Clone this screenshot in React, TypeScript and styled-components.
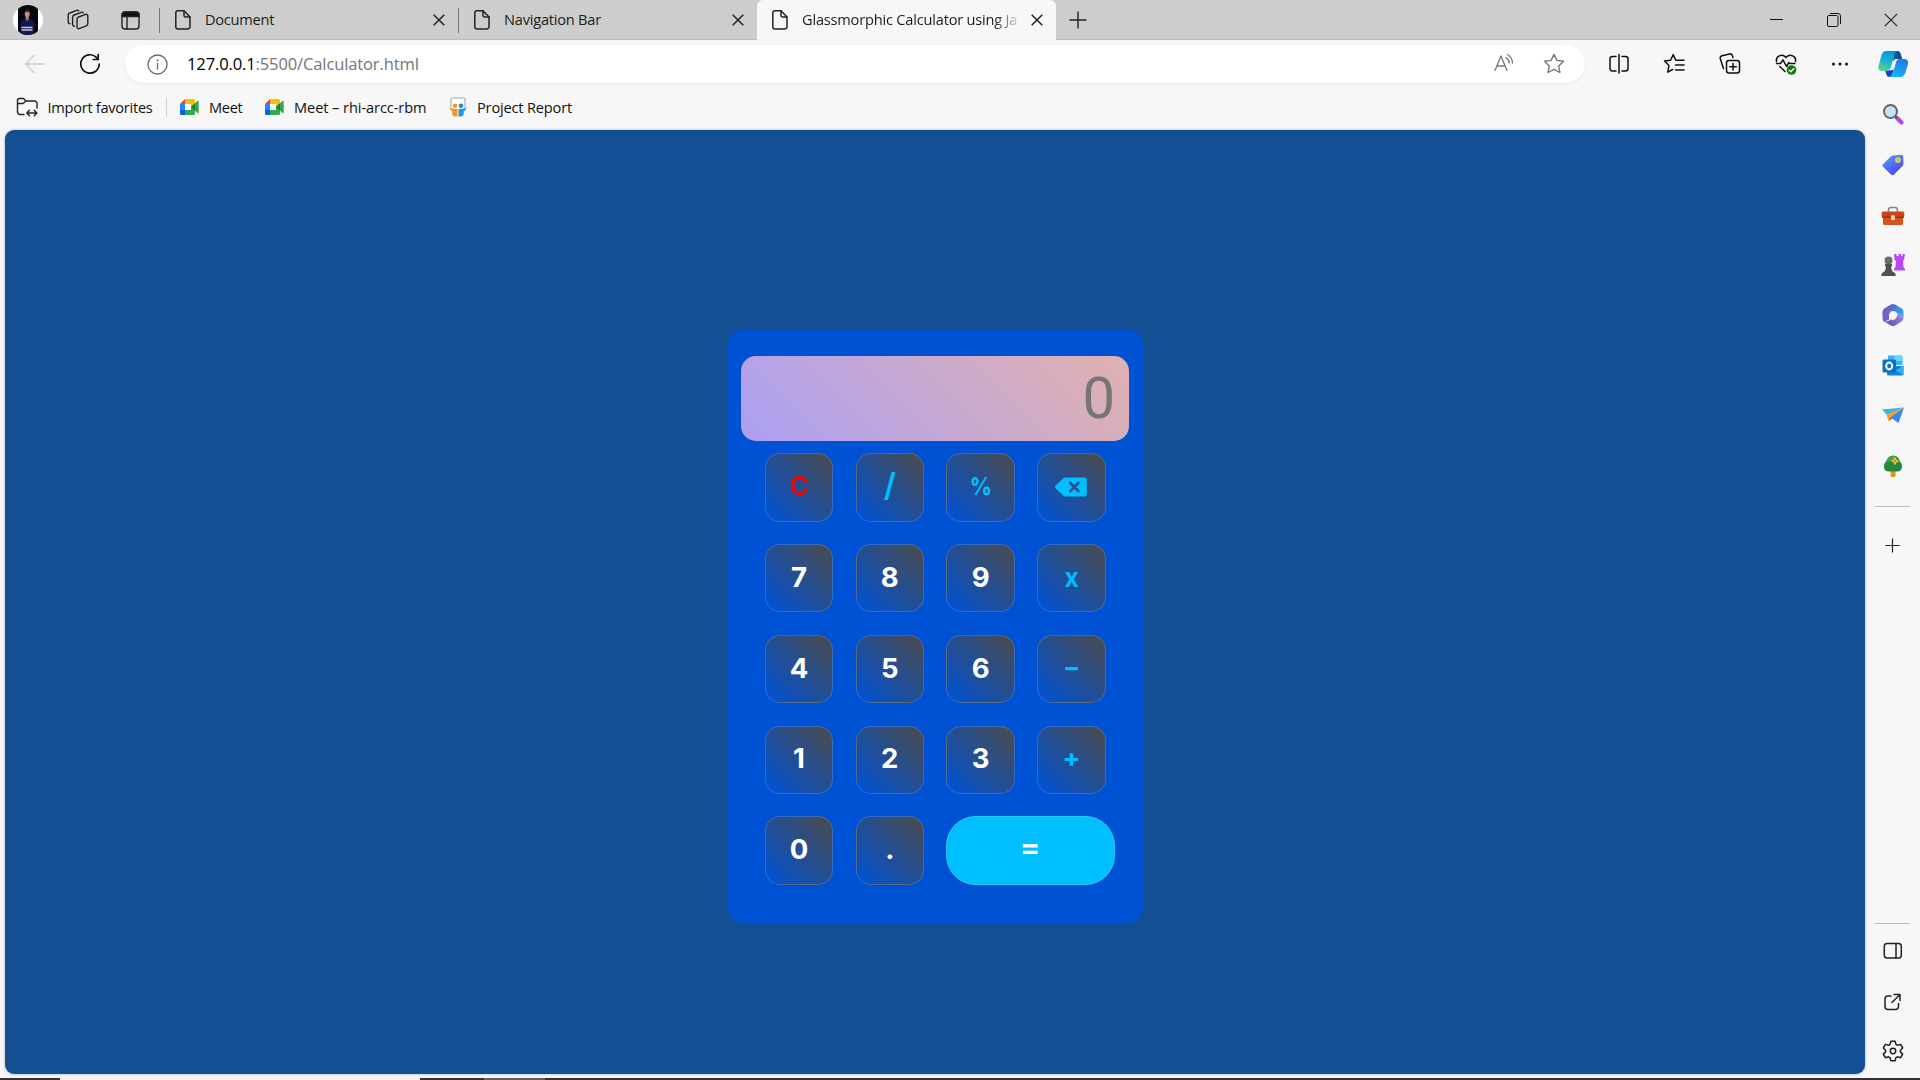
import React from "react";
import styled, { createGlobalStyle, css } from "styled-components";

const uiFont = `"Open Sans", "Noto Sans", sans-serif`;
const keyFont = `"Inter", "Open Sans", sans-serif`;

const GlobalStyle = createGlobalStyle`
  * { box-sizing: border-box; }
  html, body { margin: 0; padding: 0; overflow: hidden; }
  body { font-family: ${uiFont}; color: #1b1b1b; }
  svg { display: block; flex: none; }
`;

/* ---------- window ---------- */

const Window = styled.div`
  display: flex;
  flex-direction: column;
  width: 1920px;
  height: 1080px;
  background: #f7f7f7;
`;

const TabStrip = styled.header`
  display: flex;
  align-items: center;
  height: 40px;
  background: #cdcdcd;
  box-shadow: inset 0 -1px 0 #bcbcbc;
`;

const StripTools = styled.div`
  display: flex;
  align-items: center;
  gap: 24px;
  width: 159px;
  padding-left: 13px;
  svg:last-child { margin-left: 8px; }
`;

const Divider = styled.span<{ $h?: number; $color?: string }>`
  flex: none;
  width: 1px;
  height: ${(p) => p.$h ?? 25}px;
  background: ${(p) => p.$color ?? "#808080"};
`;

const Tab = styled.div<{ $active?: boolean; $width: number }>`
  display: flex;
  align-items: center;
  flex: none;
  width: ${(p) => p.$width}px;
  height: 40px;
  padding: 0 13px 0 15px;
  ${(p) =>
    p.$active &&
    css`
      background: #f7f7f7;
      border-radius: 6px 6px 0 0;
    `}
`;

const TabTitle = styled.span<{ $fade?: boolean; $spacing: number }>`
  flex: 1;
  min-width: 0;
  margin-left: 14px;
  margin-right: 7px;
  overflow: hidden;
  white-space: nowrap;
  font-size: 14.6px;
  line-height: 22px;
  padding-bottom: 2px;
  letter-spacing: ${(p) => p.$spacing}px;
  ${(p) =>
    p.$fade &&
    css`
      mask-image: linear-gradient(90deg, #000 calc(100% - 30px), transparent calc(100% - 2px));
    `}
`;

const NewTab = styled.div`
  margin-left: 13px;
`;

const WindowControls = styled.div`
  display: flex;
  align-items: center;
  gap: 43.5px;
  margin-left: auto;
  padding-right: 22px;
`;

const Body = styled.div`
  display: flex;
  flex: 1;
  min-height: 0;
`;

const Main = styled.div`
  display: flex;
  flex-direction: column;
  width: 1865px;
`;

const Toolbar = styled.div`
  display: flex;
  align-items: center;
  height: 48px;
  padding-left: 24px;
`;

const NavButtons = styled.div`
  display: flex;
  align-items: center;
  gap: 33px;
  width: 101px;
`;

const AddressBar = styled.div`
  display: flex;
  align-items: center;
  width: 1460px;
  height: 38px;
  padding: 0 20px 0 22px;
  border-radius: 19px;
  background: #fff;
  box-shadow: 0 1px 3px rgba(0, 0, 0, 0.07);
`;

const Url = styled.span`
  margin-left: 19px;
  font-size: 16.6px;
  line-height: 26px;
  letter-spacing: -0.16px;
  color: #767676;
  white-space: nowrap;
  b {
    font-weight: 400;
    color: #000;
  }
`;

const AddressActions = styled.div`
  display: flex;
  gap: 29px;
  margin-left: auto;
`;

const ToolbarActions = styled.div`
  display: flex;
  align-items: center;
  gap: 34px;
  margin-left: 24px;
`;

const Favorites = styled.div`
  display: flex;
  align-items: center;
  height: 42px;
  padding-left: 16px;
  padding-bottom: 4px;
`;

const Favorite = styled.div<{ $left?: number; $gap: number; $width: number; $spacing: number }>`
  display: flex;
  align-items: center;
  flex: none;
  gap: ${(p) => p.$gap}px;
  width: ${(p) => p.$width}px;
  margin-left: ${(p) => p.$left ?? 0}px;
  font-size: 14.6px;
  line-height: 20px;
  letter-spacing: ${(p) => p.$spacing}px;
  white-space: nowrap;
  color: #111;
`;

const Page = styled.main`
  display: flex;
  align-items: center;
  justify-content: center;
  width: 1860px;
  height: 944px;
  margin-left: 5px;
  border-radius: 9px;
  background: #144f94;
  box-shadow: 0 0 3px rgba(0, 0, 0, 0.3);
`;

/* ---------- sidebar ---------- */

const Sidebar = styled.aside`
  display: flex;
  flex-direction: column;
  align-items: center;
  width: 55px;
`;

const SideCell = styled.div<{ $h?: number }>`
  display: flex;
  align-items: center;
  justify-content: center;
  flex: none;
  height: ${(p) => p.$h ?? 50.2}px;
`;

const SideRule = styled.div`
  flex: none;
  width: 35px;
  height: 1px;
  background: #bdbdbd;
`;

const SideBottom = styled.div`
  display: flex;
  flex-direction: column;
  align-items: center;
  margin-top: auto;
  padding-bottom: 1px;
`;

const Taskbar = styled.div`
  display: flex;
  flex: none;
  height: 2px;
  background: #333133;
`;

const TaskbarPart = styled.span<{ $left: number; $width: number; $color: string }>`
  width: ${(p) => p.$width}px;
  margin-left: ${(p) => p.$left}px;
  background: ${(p) => p.$color};
`;

/* ---------- calculator ---------- */

const Calculator = styled.section`
  width: 415px;
  height: 593px;
  margin-top: 49px;
  margin-left: 1px;
  padding: 26px 13px 0 13px;
  border-radius: 15px;
  background: #0052d4;
`;

const Display = styled.input`
  display: block;
  width: 388px;
  height: 85px;
  padding: 0 14px 2px 14px;
  border: 0;
  border-radius: 15px;
  outline: 0;
  background: linear-gradient(45deg, #aca0f4, #e1b1ae);
  text-align: right;
  font-family: "Roboto", sans-serif;
  font-size: 58px;
  color: #333;
  &::placeholder {
    color: #757575;
    opacity: 1;
  }
`;

const Keys = styled.div`
  display: flex;
  flex-direction: column;
  gap: 22.4px;
  padding: 12.2px 0 0 23.8px;
`;

const KeyRow = styled.div`
  display: flex;
  gap: 22.4px;
`;

const keyColors = { digit: "#ffffff", clear: "#ff0000", operator: "#00bfff", equals: "#ffffff" };
type KeyKind = keyof typeof keyColors;

const Key = styled.button<{ $kind: KeyKind; $size: number; $weight: number; $shift: number }>`
  display: flex;
  align-items: center;
  justify-content: center;
  flex: none;
  width: ${(p) => (p.$kind === "equals" ? 168.8 : 68.4)}px;
  height: 68.4px;
  padding: 0 0 ${(p) => p.$shift}px;
  border: 1px solid rgba(255, 255, 255, 0.16);
  border-radius: ${(p) => (p.$kind === "equals" ? 30 : 15)}px;
  background: ${(p) =>
    p.$kind === "equals" ? "#00bfff" : "linear-gradient(45deg, #0052d4 3%, #4b4b4b)"};
  color: ${(p) => keyColors[p.$kind]};
  font-family: ${keyFont};
  font-size: ${(p) => p.$size}px;
  font-weight: ${(p) => p.$weight};
  line-height: 1;
`;

const Glyph = styled.span<{ $stretch: number }>`
  transform: scaleX(${(p) => p.$stretch});
`;

/* ---------- icons ---------- */

const line = {
  fill: "none",
  stroke: "#222",
  strokeWidth: 1.4,
  strokeLinecap: "round" as const,
  strokeLinejoin: "round" as const,
};

const FileIcon = () => (
  <svg width="16" height="20" viewBox="0 0 16 20" {...line} strokeWidth={1.5}>
    <path d="M3 .8h6L15 7v9.700a2.300 2.300 0 0 1-2.300 2.300H3.100A2.300 2.300 0 0 1 .8 16.700V3A2.200 2.200 0 0 1 3 .8Z" />
    <path d="M9 1v4.500A1.500 1.500 0 0 0 10.500 7H15" />
  </svg>
);

const CrossIcon = ({ size = 12, width = 1.5, color = "#222" }) => (
  <svg width={size} height={size} viewBox="0 0 12 12" stroke={color} strokeWidth={width}>
    <path d="M.7.7l10.600 10.600M11.300.7.7 11.300" />
  </svg>
);

const PlusIcon = ({ size = 18 }) => (
  <svg width={size} height={size} viewBox="0 0 18 18" stroke="#222" strokeWidth="1.4">
    <path d="M9 .5v17M.5 9h17" />
  </svg>
);

const AvatarIcon = () => (
  <svg width="30" height="30" viewBox="0 0 30 30">
    <circle cx="15" cy="15" r="15" fill="#fff" />
    <path d="M5 4Q9 0 15 0t10 4v22q-4 4-10 4T5 26Z" fill="#05050f" />
    <path d="M7.500 28V18q.5-3 4.500-4l2-1 2 1q4 .5 5 4v10q-3 2-7 2t-6.500-2Z" fill="#14194f" />
    <path d="M12.500 12h3.500v2.500l-1.700 1.500-1.800-1.500Z" fill="#9c6a5c" />
    <path d="M11.800 8Q11.800 5 14.200 5t2.500 3v2q-.8 3-2.500 3t-2.400-3Z" fill="#c08e7e" />
    <path d="M11.500 8V6q.2-2 2.700-2T17 6v2q-.7-1.600-2.800-1.600T11.500 8Z" fill="#241a1c" />
    <path d="M8.500 22.500h11M8.500 25h11" stroke="#c4c8e8" strokeWidth="1.300" />
  </svg>
);

const WorkspacesIcon = () => (
  <svg width="22" height="22" viewBox="0 0 22 22" {...line}>
    <path d="m11.600 8 7-2.600a1.700 1.700 0 0 1 2.200 1.600v7.700a2.500 2.500 0 0 1-1.600 2.200l-7 2.700a1.700 1.700 0 0 1-2.200-1.700v-7.700a2.500 2.500 0 0 1 1.600-2.200Z" />
    <path d="M7.400 17.300a2 2 0 0 1-1.800-2V8.200a2.500 2.500 0 0 1 1.600-2.200l7-2.700a1.800 1.800 0 0 1 2 .5" />
    <path d="M3 14.800a2 2 0 0 1-1.800-2V6.200a2.500 2.500 0 0 1 1.600-2.200l6.900-2.700a1.800 1.800 0 0 1 2 .5" />
  </svg>
);

const VerticalTabsIcon = () => (
  <svg width="19" height="19" viewBox="0 0 19 19" {...line}>
    <rect x="1" y="1" width="17" height="17" rx="3" />
    <path d="M1 4a3 3 0 0 1 3-3h11a3 3 0 0 1 3 3v1.500H1Z" fill="#111" />
    <path d="M6 6v12" />
  </svg>
);

const MinimizeIcon = () => (
  <svg width="13" height="14" viewBox="0 0 13 14" stroke="#111" strokeWidth="1">
    <path d="M0 6.500h13" />
  </svg>
);

const RestoreIcon = () => (
  <svg width="14" height="14" viewBox="0 0 14 14" fill="none" stroke="#111" strokeWidth="1">
    <rect x=".5" y="2.500" width="10.500" height="11" rx="1.500" />
    <path d="M3 .5h8a2.500 2.500 0 0 1 2.500 2.500v8" />
  </svg>
);

const BackIcon = () => (
  <svg width="22" height="20" viewBox="0 0 22 20" {...line} stroke="#cfcfcf" strokeWidth={1.500}>
    <path d="M20.500 10H1.500M10 1.500 1.500 10l8.500 8.500" />
  </svg>
);

const ReloadIcon = () => (
  <svg width="22" height="22" viewBox="0 0 22 22" {...line} stroke="#111" strokeWidth={1.700}>
    <path d="M20.200 11a9.200 9.200 0 1 1-3.100-6.900l2 2" />
    <path d="M19.200 1.500v5h-5" />
  </svg>
);

const InfoIcon = () => (
  <svg width="21" height="21" viewBox="0 0 21 21" {...line} stroke="#707070">
    <circle cx="10.500" cy="10.500" r="9.500" />
    <path d="M10.500 9.500v5.500" />
    <circle cx="10.500" cy="6.300" r=".4" fill="#707070" />
  </svg>
);

const ReadAloudIcon = () => (
  <svg width="20" height="20" viewBox="0 0 20 20" {...line} stroke="#777" strokeWidth={1.300}>
    <path d="M1 17.500 7 3l6 14.500M3 13h8" />
    <path d="M12 4.500q3 2 3.200 5.500M13.500 1.500q4.800 2.800 5 8.500" />
  </svg>
);

const StarIcon = () => (
  <svg width="22" height="22" viewBox="0 0 22 22" {...line} stroke="#777">
    <path d="m11 1.400 2.900 6 6.600.9-4.800 4.600 1.200 6.600-5.900-3.200-5.900 3.200 1.200-6.600L1.500 8.300l6.600-.9Z" />
  </svg>
);

const SplitIcon = () => (
  <svg width="20" height="22" viewBox="0 0 20 22" {...line} stroke="#111" strokeWidth={1.500}>
    <path d="M7 3.500H3.500A2.500 2.500 0 0 0 1 6v9.500A2.500 2.500 0 0 0 3.500 18H7M13 3.500h3.500A2.500 2.500 0 0 1 19 6v9.500a2.500 2.500 0 0 1-2.500 2.500H13M10 1.500v18.500" />
  </svg>
);

const FavListIcon = () => (
  <svg width="22" height="22" viewBox="0 0 22 22" {...line} stroke="#111" strokeWidth={1.500}>
    <path d="M12.800 7.200 10.200 1.600 7.600 7.200l-6.100.9 4.400 4.500-1.100 6.600 4.800-2.700M12.800 7.200H21M12.500 12H21M12.500 17H21" />
  </svg>
);

const CollectionsIcon = () => (
  <svg width="22" height="22" viewBox="0 0 22 22" {...line} stroke="#111" strokeWidth={1.500}>
    <rect x="7.500" y="7.500" width="13" height="12.500" rx="2.500" />
    <path d="M14 10.500v6.500M10.800 13.700h6.500M4.500 15.500 1.300 5.800a2.500 2.500 0 0 1 1.700-3L10.500 1a2.300 2.300 0 0 1 2.800 1.500l.7 2" />
  </svg>
);

const HealthIcon = () => (
  <svg width="22" height="22" viewBox="0 0 22 22" {...line} stroke="#111" strokeWidth={1.500}>
    <path d="M1.500 8.500C.5 3 7 .2 11 4.500c4-4.300 10.500-1.500 9.500 4M1.500 10.500h4l2.500-3.700 3.500 6.700 2.400-4 1 1h5M4.800 13.500l5.200 5" />
    <circle cx="16.500" cy="17" r="4.800" fill="#107c10" stroke="none" />
    <path d="m14.300 17.200 1.500 1.500 2.900-3" stroke="#fff" strokeWidth="1.300" />
  </svg>
);

const MoreIcon = () => (
  <svg width="18" height="6" viewBox="0 0 18 6" fill="#111">
    <circle cx="2.500" cy="3" r="1.500" />
    <circle cx="9" cy="3" r="1.500" />
    <circle cx="15.500" cy="3" r="1.500" />
  </svg>
);

const ImportIcon = () => (
  <svg width="22" height="20" viewBox="0 0 22 20" {...line} stroke="#222">
    <path d="M8 17.500H4A2.500 2.500 0 0 1 1.500 15V3.500a2 2 0 0 1 2-2H7.500L10 4h8.500A2.500 2.500 0 0 1 21 6.500V11M1.500 6.500h5.500L10 4" />
    <path d="M11 16h9.500M13.500 13.300 10.800 16l2.700 2.700M18.200 13.300l2.700 2.700-2.700 2.700" />
  </svg>
);

const MeetIcon = () => (
  <svg width="19" height="16" viewBox="0 0 19 16">
    <path d="M5 0 0 5h5Z" fill="#ea4335" />
    <path d="M5 0h8.500A1.500 1.500 0 0 1 15 1.500V5.500L11 9V5H5Z" fill="#fbbc04" />
    <path d="M0 5h5v6H0Z" fill="#2684fc" />
    <path d="M0 11h5v5H1.500A1.500 1.500 0 0 1 0 14.500Z" fill="#0066da" />
    <path d="M5 5h6v6H5Z" fill="#fff" />
    <path d="M5 11h6V7.500l4 3v4a1.500 1.500 0 0 1-1.500 1.500H5Z" fill="#34a853" />
    <path d="M11 8 17.500 2q1.200-.7 1.200.5v11q0 1.200-1.200.5Z" fill="#34a853" />
    <path d="M11 8l4-3.700v7.400Z" fill="#188038" />
  </svg>
);

const SlideShareIcon = () => (
  <svg width="18" height="20" viewBox="0 0 18 20">
    <path d="M2 10V2.500A1.500 1.500 0 0 1 3.500 1h11A1.500 1.500 0 0 1 16 2.500V10" fill="#fff" stroke="#c0c4c8" strokeWidth="1.700" />
    <circle cx="6" cy="8.700" r="2.200" fill="#f7931e" />
    <circle cx="12" cy="8.700" r="2.200" fill="#1c87c9" />
    <path d="M.5 10q2.500 2.500 8 2v7.500H5.500Q3 19 3.300 14.500Q1 13 .5 10Z" fill="#f7931e" />
    <path d="M17.500 10q-2.500 2.500-8 2v7.500h3q2.500-.5 2.200-5Q17 13 17.500 10Z" fill="#2196e3" />
  </svg>
);

const CopilotIcon = () => (
  <svg width="32" height="28" viewBox="0 0 32 28">
    <defs>
      <linearGradient id="cpA" x1=".6" y1="0" x2=".3" y2="1">
        <stop offset="0" stopColor="#0a93dc" />
        <stop offset=".5" stopColor="#17b3d2" />
        <stop offset="1" stopColor="#58d68a" />
      </linearGradient>
      <linearGradient id="cpB" x1=".7" y1="0" x2=".3" y2="1">
        <stop offset="0" stopColor="#2878df" />
        <stop offset="1" stopColor="#12b6ff" />
      </linearGradient>
    </defs>
    <path d="M17 1h3.500q2.500 0 3.300 3l1.500 5h-6.500q-2 0-3 3Z" fill="#0f5488" />
    <path d="M8 20h3q2.500 0 3.500-3l2 3-1.500 5q-.8 2-2.500 2-2.500 0-3.300-3Z" fill="#1742c8" />
    <path d="M9.500 1H20q-1.700.5-2.600 3.500L14 17q-1 4-4 4H4.500Q.5 20.500 1.500 16L4.500 5Q5.500 1 9.500 1Z" fill="url(#cpA)" />
    <path d="M22 9h5q4.800 0 4 5l-2.700 9Q27 27 23 27H12.500q2-.5 3-4L19 12Q20 9 22 9Z" fill="url(#cpB)" />
    <path d="M17.300 10q.6-1 2-1h2.200q-2 .6-2.500 2.700l-1.500 5q-1 3.500-3.500 3.500h-3q2.500-.5 3.200-3Z" fill="#fff" />
  </svg>
);

const SearchIcon = () => (
  <svg width="22" height="22" viewBox="0 0 22 22">
    <path d="m15 15 4.500 4.500" stroke="#b83df5" strokeWidth="4" strokeLinecap="round" />
    <path d="m12.500 12.500 2.500 2.500" stroke="#555" strokeWidth="2.500" />
    <circle cx="8.500" cy="8.500" r="6.500" fill="#bfe4fb" stroke="#666" strokeWidth="2" />
  </svg>
);

const TagIcon = () => (
  <svg width="22" height="22" viewBox="0 0 22 22">
    <defs>
      <linearGradient id="tag" x1="0" y1="0" x2=".6" y2="1">
        <stop offset="0" stopColor="#5ea5fa" />
        <stop offset="1" stopColor="#4347f0" />
      </linearGradient>
    </defs>
    <path d="M11 1.500 19 .8q2 0 2.200 1.700l.3 7q0 1.500-1 2.500L12 20.500q-1.500 1.300-3 0L1.200 13q-1.300-1.500 0-3L9 2.300Q10 1.500 11 1.500Z" fill="url(#tag)" />
    <circle cx="16" cy="6" r="2" fill="#8fb0f5" stroke="#f8c930" strokeWidth="1.700" />
  </svg>
);

const ToolboxIcon = () => (
  <svg width="24" height="20" viewBox="0 0 24 20">
    <path d="M7.500 6V4q0-2.500 2.500-2.500h4q2.500 0 2.500 2.500v2" fill="none" stroke="#888" strokeWidth="1.600" />
    <rect x=".7" y="5.500" width="22.600" height="6" rx="1.500" fill="#cc4413" />
    <path d="M2 11h20v6.500q0 1.500-1.500 1.500h-17Q2 19 2 17.500Z" fill="#d9531f" />
    <path d="M1 10.500h22v1.500H1Z" fill="#9e3310" />
    <rect x="10" y="9" width="4" height="5" rx="1.500" fill="#d6d6d6" />
  </svg>
);

const GamesIcon = () => (
  <svg width="24" height="24" viewBox="0 0 24 24">
    <path d="M13 1h2.500v2h2V1h2.500v2h1.500V1H24l-1 6-1 1 .5 6 1.500 2v1.500H13V16l1.500-2 .5-6-1.500-1Z" fill="#b94af5" />
    <circle cx="7.500" cy="7.500" r="4" fill="#6b6b6b" />
    <path d="M4 11h7v2l-1 1 1 4 3.500 2.500V23H.5v-2.500L4 18l1-4-1-1Z" fill="#505050" />
  </svg>
);

const OfficeIcon = () => (
  <svg width="22" height="24" viewBox="0 0 22 24">
    <defs>
      <linearGradient id="ofA" x1="0" y1="0" x2="1" y2="1">
        <stop offset="0" stopColor="#5161c9" />
        <stop offset="1" stopColor="#2fb8ee" />
      </linearGradient>
      <linearGradient id="ofB" x1="0" y1="1" x2="1" y2="0">
        <stop offset="0" stopColor="#4353b5" />
        <stop offset="1" stopColor="#c781df" />
      </linearGradient>
    </defs>
    <path d="M9 1.500q2-1 4 0l6.500 3.800q2 1.200 2 3.500v6.500l-6-5q-5-4-8.500 1Z" fill="url(#ofA)" />
    <path d="M9 1.500v5L7 11.500v5L2.500 19q-2-1-2-4V9q0-2.500 2-3.700Z" fill="#7064c7" />
    <path d="M2.500 18.700Q5 19 9 16.500q5 2 6.500-6l6 4.800q0 2-2 3.300L13 22.500q-2 1-4 0Z" fill="url(#ofB)" />
    <path d="M9 8.300h4.200l2.200 3.700-2.200 3.700H9L6.800 12Z" fill="#f7f7f7" />
  </svg>
);

const OutlookIcon = () => (
  <svg width="22" height="22" viewBox="0 0 22 22">
    <path d="M6 1.500h13.500q1 0 1 1V11H6Z" fill="#35b8f1" />
    <path d="M12.500 1.500h7q1 0 1 1V7h-8Z" fill="#69d7fb" />
    <path d="M6 7h7v6H6Z" fill="#0a65b0" />
    <path d="M5 12h16.500v8q0 1.500-1.500 1.500H6.500Q5 21.500 5 20Z" fill="#1781d4" />
    <path d="m21.500 11.500-8 5 8 4.500Z" fill="#38b0ed" />
    <rect x=".5" y="5.500" width="13.500" height="13" rx="1.500" fill="#0a70c8" />
    <ellipse cx="7.200" cy="12" rx="3" ry="3.400" fill="none" stroke="#fff" strokeWidth="2" />
  </svg>
);

const PlaneIcon = () => (
  <svg width="24" height="20" viewBox="0 0 24 20">
    <path d="m1 4.500 22-2L6 10Z" fill="#38b1ee" />
    <path d="M23 2.500 5.500 9.500 7.500 16l4-3.500Z" fill="#f2a328" />
    <path d="m7.500 16 4-2.500-2-1.500Z" fill="#b46a12" />
    <path d="M23 2.500 9.500 12.500 17.500 18Z" fill="#3788ed" />
  </svg>
);

const TreeIcon = () => (
  <svg width="22" height="24" viewBox="0 0 22 24">
    <rect x="8.700" y="14" width="4.800" height="9" rx="1" fill="#e09324" />
    <path d="M11 1.500q5 0 7 6 2 2 2 5 0 5-5 5H7q-5 0-5-5 0-3 2-5 2-6 7-6Z" fill="#24893f" />
    <path d="M4.500 8Q6 2 11 2q2 0 3.500 1.200Q9 8 4.500 8Z" fill="#46a651" />
    <path d="M13 4.800v4.400M10.800 7h4.400" stroke="#f8c12e" strokeWidth="2.600" strokeLinecap="round" />
    <circle cx="13" cy="7" r="1" fill="#e06b20" />
  </svg>
);

const PanelIcon = () => (
  <svg width="20" height="18" viewBox="0 0 20 18" {...line} strokeWidth={1.500}>
    <rect x="1.300" y="1.500" width="17" height="14.500" rx="2.800" />
    <path d="M13 1.500V16" />
  </svg>
);

const OpenIcon = () => (
  <svg width="20" height="20" viewBox="0 0 20 20" {...line} strokeWidth={1.500}>
    <path d="M8 4H5a3 3 0 0 0-3 3v7.500a3 3 0 0 0 3 3h7.500a3 3 0 0 0 3-3v-3M11 2.500h6V8.500M17 2.500 9 10.500" />
  </svg>
);

const GearIcon = () => (
  <svg width="22" height="22" viewBox="0 0 22 22" {...line} strokeWidth={1.500}>
    <path d="M8.900 1.300h4.200l.8 3.100 1.600.9 3.100-.9 2.100 3.600-2.300 2.200v1.700l2.300 2.200-2.100 3.600-3.100-.9-1.600.9-.8 3.100H8.900l-.8-3.100-1.600-.9-3.100.9-2.100-3.600 2.300-2.200v-1.700L1.300 8l2.100-3.600 3.100.9 1.600-.9Z" />
    <circle cx="11" cy="11" r="2.700" />
  </svg>
);

const BackspaceIcon = () => (
  <svg width="32" height="20" viewBox="0 0 32 20">
    <path d="M.6 8.600 8.400 1.200Q9.300.5 10.500.5H29q2.800 0 2.800 2.700v13.500q0 2.800-2.800 2.800H10.500q-1.200 0-2.100-.8L.6 11.300q-1-1.300 0-2.700Z" fill="#00bfff" />
    <path d="m15.300 6 8 8M23.300 6l-8 8" stroke="#2a5090" strokeWidth="2.700" strokeLinecap="round" />
  </svg>
);

/* ---------- data ---------- */

type KeyDef = {
  label: React.ReactNode;
  kind?: KeyKind;
  size?: number;
  weight?: number;
  shift?: number;
  stretch?: number;
};

const keyRows: KeyDef[][] = [
  [
    { label: "C", kind: "clear", size: 25, weight: 600, shift: 1, stretch: 1.06 },
    { label: "/", kind: "operator", size: 32, weight: 600, shift: 4 },
    { label: "%", kind: "operator", size: 25, weight: 800, shift: 1, stretch: 0.86 },
    { label: <BackspaceIcon />, kind: "operator", shift: 0 },
  ],
  [{ label: "7" }, { label: "8" }, { label: "9" }, { label: "x", kind: "operator", size: 26, shift: 1, stretch: 0.94 }],
  [{ label: "4" }, { label: "5" }, { label: "6" }, { label: "-", kind: "operator", shift: 3, stretch: 1.4 }],
  [{ label: "1" }, { label: "2" }, { label: "3" }, { label: "+", kind: "operator", size: 25, shift: 2, stretch: 1.08 }],
  [{ label: "0" }, { label: "." }, { label: "=", kind: "equals", shift: 5, stretch: 1.1 }],
];

export default function App() {
  return (
    <Window>
      <GlobalStyle />
      <TabStrip>
        <StripTools>
          <AvatarIcon />
          <WorkspacesIcon />
          <VerticalTabsIcon />
        </StripTools>
        <Divider $color="#777" />
        <Tab $width={298}>
          <FileIcon />
          <TabTitle $spacing={-0.25}>Document</TabTitle>
          <CrossIcon />
        </Tab>
        <Divider $color="#777" />
        <Tab $width={298}>
          <FileIcon />
          <TabTitle $spacing={-0.22}>Navigation Bar</TabTitle>
          <CrossIcon />
        </Tab>
        <Tab $active $width={299}>
          <FileIcon />
          <TabTitle $fade $spacing={-0.2}>Glassmorphic Calculator using Ja</TabTitle>
          <CrossIcon />
        </Tab>
        <NewTab>
          <PlusIcon />
        </NewTab>
        <WindowControls>
          <MinimizeIcon />
          <RestoreIcon />
          <CrossIcon size={14} width={1} />
        </WindowControls>
      </TabStrip>

      <Body>
        <Main>
          <Toolbar>
            <NavButtons>
              <BackIcon />
              <ReloadIcon />
            </NavButtons>
            <AddressBar>
              <InfoIcon />
              <Url>
                <b>127.0.0.1</b>:5500/Calculator.html
              </Url>
              <AddressActions>
                <ReadAloudIcon />
                <StarIcon />
              </AddressActions>
            </AddressBar>
            <ToolbarActions>
              <SplitIcon />
              <FavListIcon />
              <CollectionsIcon />
              <HealthIcon />
              <MoreIcon />
            </ToolbarActions>
          </Toolbar>

          <Favorites>
            <Favorite $gap={9.5} $width={150} $spacing={-0.27}>
              <ImportIcon />
              Import favorites
            </Favorite>
            <Divider $h={20} $color="#cfcfcf" />
            <Favorite $left={13} $gap={10} $width={85} $spacing={-0.3}>
              <MeetIcon />
              Meet
            </Favorite>
            <Favorite $gap={10} $width={184} $spacing={-0.08}>
              <MeetIcon />
              Meet – rhi-arcc-rbm
            </Favorite>
            <Favorite $gap={10} $width={150} $spacing={-0.18}>
              <SlideShareIcon />
              Project Report
            </Favorite>
          </Favorites>

          <Page>
            <Calculator>
              <Display placeholder="0" readOnly />
              <Keys>
                {keyRows.map((row, r) => (
                  <KeyRow key={r}>
                    {row.map((k, i) => (
                      <Key
                        key={i}
                        $kind={k.kind ?? "digit"}
                        $size={k.size ?? 27.5}
                        $weight={k.weight ?? 700}
                        $shift={k.shift ?? 1}
                      >
                        <Glyph $stretch={k.stretch ?? 1}>{k.label}</Glyph>
                      </Key>
                    ))}
                  </KeyRow>
                ))}
              </Keys>
            </Calculator>
          </Page>
        </Main>

        <Sidebar>
          <SideCell $h={48}><CopilotIcon /></SideCell>
          <SideCell $h={51}><SearchIcon /></SideCell>
          <SideCell $h={52.200}><TagIcon /></SideCell>
          <SideCell $h={49}><ToolboxIcon /></SideCell>
          <SideCell><GamesIcon /></SideCell>
          <SideCell><OfficeIcon /></SideCell>
          <SideCell $h={49.500}><OutlookIcon /></SideCell>
          <SideCell><PlaneIcon /></SideCell>
          <SideCell $h={51.500}><TreeIcon /></SideCell>
          <SideCell $h={13.800} />
          <SideRule />
          <SideCell $h={78}><PlusIcon size={15} /></SideCell>
          <SideBottom>
            <SideRule />
            <SideCell $h={54}><PanelIcon /></SideCell>
            <SideCell $h={47}><OpenIcon /></SideCell>
            <SideCell $h={52}><GearIcon /></SideCell>
          </SideBottom>
        </Sidebar>
      </Body>

      <Taskbar>
        <TaskbarPart $left={0} $width={60} $color="#333133" />
        <TaskbarPart $left={0} $width={360} $color="#f2f2f2" />
        <TaskbarPart $left={64} $width={61} $color="#626062" />
      </Taskbar>
    </Window>
  );
}
